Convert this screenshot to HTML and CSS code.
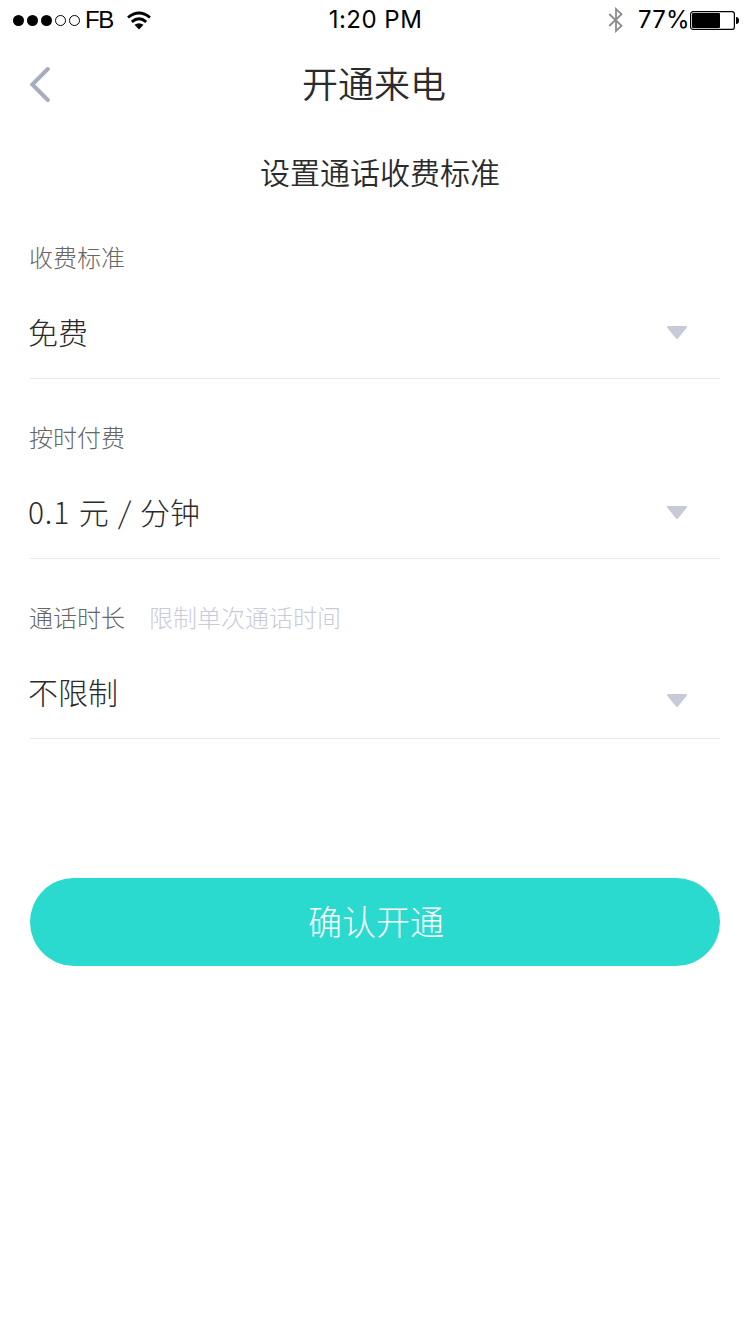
FILE: index.html
```html
<!DOCTYPE html>
<html lang="zh-CN">
<head>
<meta charset="utf-8">
<title>开通来电</title>
<link rel="stylesheet" href="styles.css">
</head>
<body>
<div class="status">
  <div class="status-left">
    <svg class="signal" width="70" height="14" viewBox="0 0 70 14">
      <circle cx="6.5" cy="7.500" r="5.5"/><circle cx="20.5" cy="7.500" r="5.5"/><circle cx="34.5" cy="7.500" r="5.5"/>
      <g fill="none" stroke="#000"><circle cx="48.5" cy="7.500" r="5"/><circle cx="62.5" cy="7.500" r="5"/></g>
    </svg>
    <span class="carrier">FB</span>
    <svg class="wifi" width="24" height="19" viewBox="0 0 24 19">
      <g fill="none" stroke="#000" stroke-width="2.8"><path d="M1 6.5Q12-2.5 23 6.500"/><path d="M4.800 10.800Q12 4.800 19.200 10.800"/></g>
      <path d="M7.500 13.800Q12 10.600 16.500 13.800L12 18.500Z"/>
    </svg>
  </div>
  <span class="time">1:20 PM</span>
  <div class="status-right">
    <svg class="bluetooth" width="16" height="26" viewBox="0 0 16 26"><path d="M1.200 7L13.500 18.800L8 24V2L13.500 7.200L1.200 19" fill="none" stroke="#8c8c8c" stroke-width="1.800"/></svg>
    <span class="percent">77%</span>
    <svg class="battery" width="49" height="19" viewBox="0 0 49 19">
      <rect x=".6" y=".6" width="43.800" height="17.800" rx="2.500" fill="#fff" stroke="#000" stroke-width="1.200"/>
      <rect x="2" y="2" width="28" height="15" rx="1"/>
      <path d="M46 6q3 0 3 3.500T46 13z"/>
    </svg>
  </div>
</div>
<header class="nav">
  <svg class="back" width="22" height="36" viewBox="0 0 22 36"><path d="M17.800 3L2.300 18.500L17.800 34" fill="none" stroke="#a6adbf" stroke-width="4" stroke-linecap="round"/></svg>
  <h1 class="title">开通来电</h1>
</header>
<main class="content">
  <h2 class="subtitle">设置通话收费标准</h2>
  <section class="field">
    <div class="label">收费标准</div>
    <div class="row"><span class="value">免费</span>
      <svg class="caret" width="22" height="14" viewBox="0 0 22 14"><path d="M2 1H20L11 12Z"/></svg></div>
  </section>
  <section class="field">
    <div class="label">按时付费</div>
    <div class="row"><span class="value price">0.1 元 <span class="slash">/</span> 分钟</span>
      <svg class="caret" width="22" height="14" viewBox="0 0 22 14"><path d="M2 1H20L11 12Z"/></svg></div>
  </section>
  <section class="field">
    <div class="label">通话时长<span class="hint">限制单次通话时间</span></div>
    <div class="row"><span class="value">不限制</span>
      <svg class="caret caret-low" width="22" height="14" viewBox="0 0 22 14"><path d="M2 1H20L11 12Z"/></svg></div>
  </section>
  <button class="submit">确认开通</button>
</main>
</body>
</html>
```
FILE: styles.css
```css
* { box-sizing: border-box; }
body {
  margin: 0;
  min-height: 1334px;
  background: #fff;
  color: #2b2b2b;
  font-family: "Noto Sans CJK SC", sans-serif;
}
svg { display: block; flex: none; }
.status {
  display: grid;
  grid-template-columns: 1fr auto 1fr;
  align-items: center;
  height: 40px;
  padding: 0 11px 0 12px;
  color: #000;
  font-family: Inter, sans-serif;
  font-size: 24px;
  line-height: 40px;
}
.status-left, .status-right { display: flex; align-items: center; height: 40px; }
.status-right { justify-content: flex-end; }
.carrier { margin-left: 3px; width: 30px; font-family: "Liberation Sans", sans-serif; font-size: 24px; letter-spacing: -1.5px; }
.wifi { margin-left: 12px; }
.time { letter-spacing: .5px; }
.bluetooth { margin-right: 14px; }
.percent { letter-spacing: .3px; }
.nav {
  display: grid;
  grid-template-columns: 60px 1fr 60px;
  align-items: center;
  height: 88px;
  padding: 0 30px;
}
.title { margin: 0 1px 0 -1px; padding-bottom: 4px; text-align: center; font-size: 36px; font-weight: 350; line-height: 84px; }
.content { padding: 0 30px; }
.subtitle { margin: 0; padding-left: 10px; height: 90px; line-height: 86px; text-align: center; font-size: 30px; font-weight: 350; }
.field { height: 161px; margin-bottom: 19px; border-bottom: 1px solid #ebebed; }
.label { display: flex; height: 80px; margin-left: -1px; line-height: 78px; color: #666; font-size: 24px; font-weight: 300; }
.hint { margin-left: 24px; color: #c9cbd8; }
.row { display: flex; justify-content: space-between; align-items: center; height: 70px; padding-right: 32px; }
.value { height: 70px; margin-left: -2px; font-size: 30px; font-weight: 300; line-height: 66px; }
.price { word-spacing: 3px; }
.price::first-letter { letter-spacing: .8px; }
.slash { display: inline-block; margin-right: -1px; padding-left: 1px; transform: skewX(-4deg); }
.caret { fill: #c7cbd8; stroke: #c7cbd8; stroke-width: 2; stroke-linejoin: round; }
.caret-low { margin-top: 16px; }
.submit {
  display: block;
  width: 100%;
  height: 88px;
  margin-top: 139px;
  padding: 0 0 2px 2px;
  border: 0;
  border-radius: 44px;
  background: #2adace;
  color: #fff;
  font-family: inherit;
  font-size: 34px;
  font-weight: 300;
  line-height: 86px;
}
```
